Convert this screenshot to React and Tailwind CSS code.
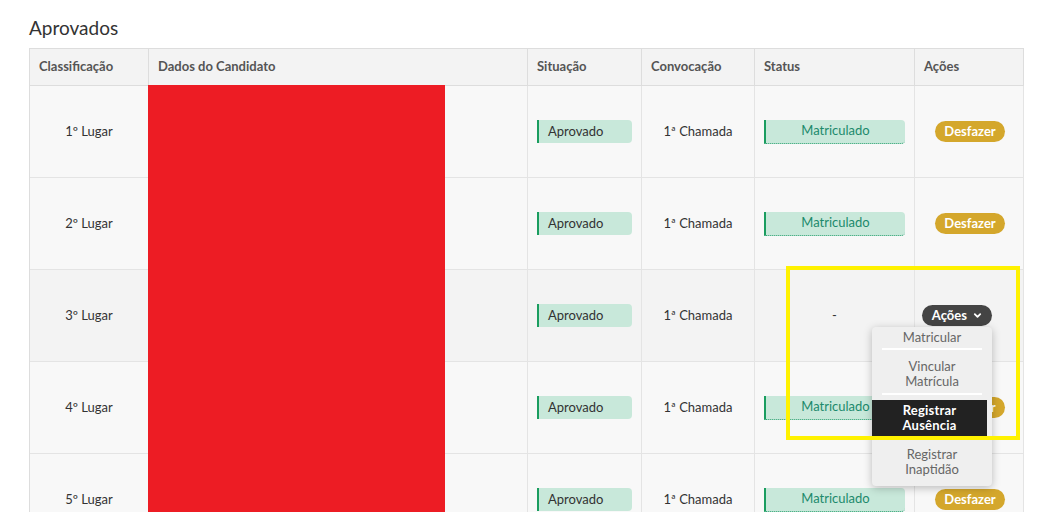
import React from "react";

const rows = [
  { pos: "1º Lugar", status: "matriculado" },
  { pos: "2º Lugar", status: "matriculado" },
  { pos: "3º Lugar", status: "none", hover: true },
  { pos: "4º Lugar", status: "matriculado" },
  { pos: "5º Lugar", status: "matriculado" },
];

const headers = ["Classificação", "Dados do Candidato", "Situação", "Convocação", "Status", "Ações"];

const Chevron = () => (
  <svg width="9" height="9" viewBox="0 0 10 10" className="ml-[6px]">
    <path d="M2 3.5 L5 6.5 L8 3.5" fill="none" stroke="white" strokeWidth="2" strokeLinecap="round" strokeLinejoin="round" />
  </svg>
);

const ActionsMenu = () => (
  <div className="relative">
    <button className="flex items-center h-[21px] px-[10px] rounded-full bg-[#444444] text-white text-[13px] font-bold">
      Ações
      <Chevron />
    </button>
    <div className="absolute right-0 top-[22px] w-[120px] bg-[#efefef] rounded-[4px] shadow-[0_2px_8px_rgba(0,0,0,0.25)] text-[13px] leading-[15px] text-[#666666] text-center z-10">
      <div className="h-[21px] flex items-center justify-center">Matricular</div>
      <div className="mx-[10px] h-[2px] bg-white" />
      <div className="pt-[9px] pb-[4px]">
        Vincular
        <br />
        Matrícula
      </div>
      <div className="mx-[10px] h-[2px] bg-white" />
      <div className="mt-[5px] mr-[5px] bg-[#222222] text-white font-bold py-[3px] tracking-[0.2px]">
        Registrar
        <br />
        Ausência
      </div>
      <div className="pt-[11px] pb-[9px]">
        Registrar
        <br />
        Inaptidão
      </div>
    </div>
  </div>
);

const App = () => {
  return (
    <div className="w-[1047px] h-[512px] overflow-hidden bg-white font-['Lato','Liberation_Sans',sans-serif] text-[#333333]">
      <div className="pt-[14px] pl-[29px]">
        <h1 className="text-[19px] leading-[28px] text-[#333333] mb-[6px]">Aprovados</h1>
        <div className="relative w-[995px]">
          <div className="grid grid-cols-[119px_379px_114px_113px_160px_109px] border-l border-t border-[#dddddd]">
            {headers.map((h) => (
              <div
                key={h}
                className="h-[37px] flex items-center px-[9px] bg-[#f3f3f3] border-r border-b border-[#dddddd] text-[13px] font-bold text-[#555555]"
              >
                {h}
              </div>
            ))}
            {rows.map((r, i) => {
              const bg = r.hover ? "bg-[#f3f3f3]" : "bg-[#f8f8f8]";
              const cell = `h-[92px] border-r border-b border-[#e4e4e4] ${bg} text-[13px]`;
              return (
                <React.Fragment key={i}>
                  <div className={`${cell} flex items-center justify-center`}>{r.pos}</div>
                  <div className={cell} />
                  <div className={`${cell} flex items-center pl-[9px]`}>
                    <div className="w-[95px] h-[23px] flex items-center pl-[9px] bg-[#c8e8da] border-l-2 border-[#1a9d5f] rounded-r-[4px] text-[#333333]">
                      Aprovado
                    </div>
                  </div>
                  <div className={`${cell} flex items-center justify-center`}>1ª Chamada</div>
                  <div className={`${cell} flex items-center ${r.status === "none" ? "justify-center" : "pl-[9px]"}`}>
                    {r.status === "none" ? (
                      <span>-</span>
                    ) : (
                      <div className="w-[141px] h-[24px] flex items-center justify-center bg-[#c8e8da] border-l-2 border-b border-l-[#1a9d5f] border-b-[#2aa070] border-dotted [border-left-style:solid] rounded-r-[4px] text-[#1c8a6c]">
                        Matriculado
                      </div>
                    )}
                  </div>
                  <div className={`${cell} flex items-center ${r.hover ? "justify-end pr-[31px]" : "justify-center"}`}>
                    {r.hover ? (
                      <ActionsMenu />
                    ) : (
                      <button className="h-[21px] px-[9px] ml-[2px] rounded-full bg-[#d4a72c] text-white text-[13px] font-bold">
                        Desfazer
                      </button>
                    )}
                  </div>
                </React.Fragment>
              );
            })}
          </div>
          {/* redaction block over candidate data */}
          <div className="absolute left-[119px] top-[37px] w-[297px] bottom-0 bg-[#ed1c24]" />
          {/* highlight box */}
          <div className="absolute left-[757px] top-[218px] w-[234px] h-[174px] border-4 border-[#fff200] z-20 pointer-events-none" />
        </div>
      </div>
    </div>
  );
};

export default App;
